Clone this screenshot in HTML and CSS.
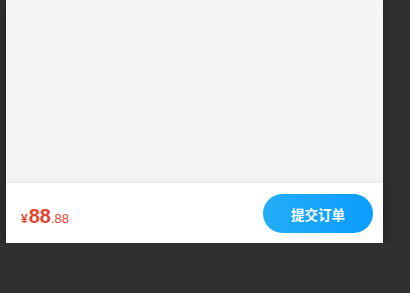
FILE: index.html
```html
<!DOCTYPE html>
<html lang="zh">
<head>
<meta charset="utf-8">
<link rel="stylesheet" href="styles.css">
</head>
<body>
<div class="panel">
  <div class="content"></div>
  <div class="bar">
    <div class="price"><span class="cur">¥</span><span class="int">88</span><span class="dec">.88</span></div>
    <button class="submit">提交订单</button>
  </div>
</div>
</body>
</html>
```
FILE: styles.css
```css
html, body {
  margin: 0;
  padding: 0;
  background: #303030;
  font-family: "Liberation Sans", "Noto Sans CJK SC", sans-serif;
}
.panel {
  margin-left: 6px;
  width: 377px;
  height: 243px;
  display: flex;
  flex-direction: column;
  box-shadow: 0 4px 12px rgba(0, 0, 0, 0.35);
}
.content {
  flex: 1;
  background: #f5f5f5;
}
.bar {
  height: 60px;
  background: #ffffff;
  display: flex;
  align-items: center;
  justify-content: space-between;
  padding: 0 10px 0 15px;
  box-shadow: 0 -2px 5px rgba(0, 0, 0, 0.05);
  position: relative;
}
.price {
  color: #e5432c;
  display: flex;
  align-items: baseline;
  margin-top: 7px;
}
.cur {
  font-size: 12px;
  font-weight: bold;
  margin-right: 1px;
}
.int {
  font-size: 20px;
  font-weight: bold;
}
.dec {
  font-size: 13px;
  font-weight: normal;
}
.submit {
  width: 110px;
  height: 39px;
  border: none;
  border-radius: 20px;
  background: linear-gradient(to right, #23adf8, #0b9cfd);
  color: #ffffff;
  font-family: "Noto Sans CJK SC", sans-serif;
  font-size: 13.5px;
  font-weight: bold;
  padding: 0;
  margin-top: 1px;
}
```
